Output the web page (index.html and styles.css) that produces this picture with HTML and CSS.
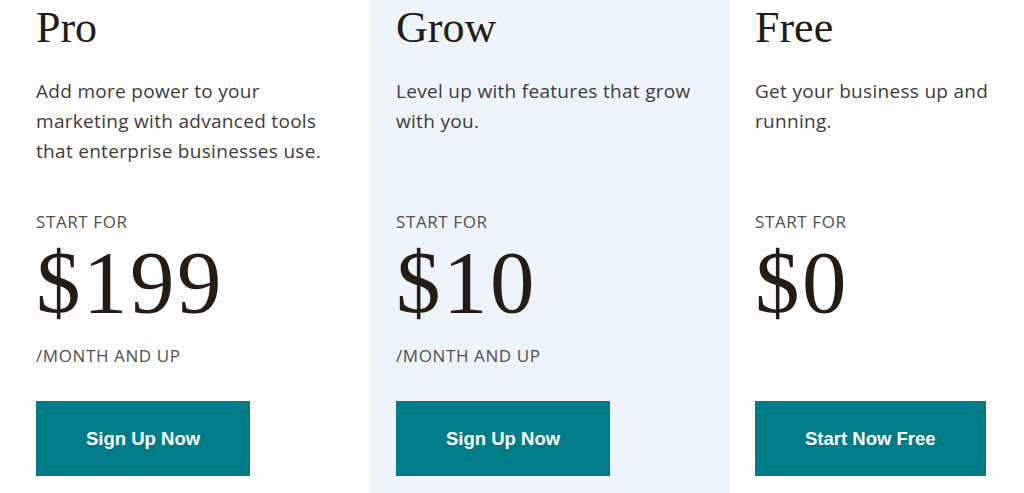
FILE: index.html
```html
<!DOCTYPE html>
<html lang="en">
<head>
<meta charset="utf-8">
<title>Pricing</title>
<link rel="stylesheet" href="styles.css">
</head>
<body>
<main class="plans">
  <section class="plan">
    <h2 class="plan-name">Pro</h2>
    <p class="plan-desc">Add more power to your marketing with advanced tools that enterprise businesses use.</p>
    <p class="start">START FOR</p>
    <p class="price">$199</p>
    <p class="per">/MONTH AND UP</p>
    <a class="btn" href="#">Sign Up Now</a>
  </section>
  <section class="plan plan--featured">
    <h2 class="plan-name">Grow</h2>
    <p class="plan-desc">Level up with features that grow with you.</p>
    <p class="start">START FOR</p>
    <p class="price">$10</p>
    <p class="per">/MONTH AND UP</p>
    <a class="btn" href="#">Sign Up Now</a>
  </section>
  <section class="plan plan--last">
    <h2 class="plan-name">Free</h2>
    <p class="plan-desc">Get your business up and running.</p>
    <p class="start">START FOR</p>
    <p class="price">$0</p>
    <p class="per">&nbsp;</p>
    <a class="btn" href="#">Start Now Free</a>
  </section>
</main>
</body>
</html>
```

FILE: styles.css
```css
* { box-sizing: border-box; }
html, body { margin: 0; padding: 0; background: #ffffff; }
body { width: 1024px; height: 493px; overflow: hidden; color: #241c15; }
.plans {
  display: flex;
  width: 1024px;
  padding-left: 10px;
  height: 493px;
}
.plan {
  flex: 0 0 360px;
  padding: 0 26px;
  display: flex;
  flex-direction: column;
  align-items: flex-start;
}
.plan--last {
  flex: 1 1 auto;
  min-width: 0;
  padding-left: 25px;
  padding-right: 0;
}
.plan--featured { background: #edf4fc; }
.plan-name {
  margin: 6px 0 0;
  font-family: "Liberation Serif", serif;
  font-weight: 400;
  font-size: 44px;
  line-height: 44px;
  color: #241c15;
}
.plan-desc {
  margin: 26px 0 0;
  min-height: 90px;
  max-width: 300px;
  font-family: "Open Sans", sans-serif;
  font-size: 19px;
  letter-spacing: 0.3px;
  line-height: 30px;
  color: #403b3b;
}
.start, .per {
  margin: 0;
  font-family: "Open Sans", sans-serif;
  font-size: 17px;
  letter-spacing: 0.6px;
  line-height: 23px;
  color: #52504d;
}
.start { margin-top: 44px; }
.price {
  margin: 0;
  font-family: "Liberation Serif", serif;
  font-size: 89px;
  line-height: 99px;
  letter-spacing: 2.5px;
  color: #241c15;
}
.per { margin-top: 12px; }
.btn {
  margin-top: 34px;
  display: inline-block;
  background: #007c89;
  color: #ffffff;
  font-family: "Liberation Sans", Arial, sans-serif;
  font-weight: 700;
  font-size: 18.5px;
  line-height: 75px;
  height: 75px;
  padding: 0 50px;
  text-decoration: none;
}
```
